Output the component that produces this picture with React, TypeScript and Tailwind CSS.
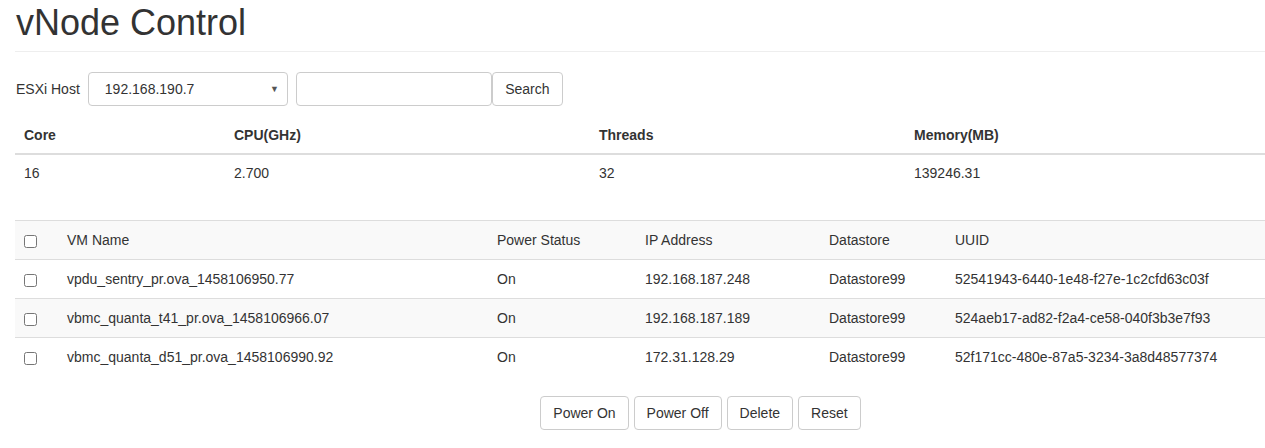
const host = {
    core: 16,
    cpu: '2.700',
    threads: 32,
    memory: '139246.31',
}

const vms = [
    { name: 'vpdu_sentry_pr.ova_1458106950.77', power: 'On', ip: '192.168.187.248', ds: 'Datastore99', uuid: '52541943-6440-1e48-f27e-1c2cfd63c03f' },
    { name: 'vbmc_quanta_t41_pr.ova_1458106966.07', power: 'On', ip: '192.168.187.189', ds: 'Datastore99', uuid: '524aeb17-ad82-f2a4-ce58-040f3b3e7f93' },
    { name: 'vbmc_quanta_d51_pr.ova_1458106990.92', power: 'On', ip: '172.31.128.29', ds: 'Datastore99', uuid: '52f171cc-480e-87a5-3234-3a8d48577374' },
]

function Check() {
    return <input type="checkbox" className="w-[13px] h-[13px] m-0 align-middle accent-gray-400" />
}

function Btn({ label, className = '' }: { label: string; className?: string }) {
    return (
        <button className={`h-[34px] px-3 border border-[#ccc] rounded-[4px] bg-white text-[14px] text-[#333] ${className}`}>
            {label}
        </button>
    )
}

export default function App() {
    return (
        <div className="w-[1265px] overflow-hidden bg-white text-[#333] text-[14px] leading-[20px] font-['Liberation_Sans',Arial,sans-serif]">
            <div className="w-[1401px] px-[15px]">
                {/* Header */}
                <div className="border-b border-[#eee] pt-[3px] pb-[8px]">
                    <h1 className="text-[36px] leading-[40px] font-normal pl-[1px]">vNode Control</h1>
                </div>

                {/* Host form */}
                <div className="flex items-center mt-[20px] h-[34px]">
                    <label className="pl-[1px] mr-[8px]">ESXi Host</label>
                    <div className="w-[200px] h-[34px] border border-[#ccc] rounded-[4px] flex items-center justify-between pl-[16px] pr-[8px]">
                        <span>192.168.190.7</span>
                        <span className="text-[9px] leading-none text-[#555]">▼</span>
                    </div>
                    <div className="w-[196px] h-[34px] border border-[#ccc] rounded-[4px] ml-[8px]" />
                    <Btn label="Search" className="w-[71px]" />
                </div>

                {/* Host stats */}
                <table className="w-full border-collapse mt-[11px] mb-[29px]">
                    <thead>
                        <tr className="border-b-2 border-[#ddd] text-left">
                            <th className="w-[211px] px-[9px] py-[8px] font-bold h-[36px]">Core</th>
                            <th className="w-[365px] px-[8px] py-[8px] font-bold">CPU(GHz)</th>
                            <th className="w-[315px] px-[8px] py-[8px] font-bold">Threads</th>
                            <th className="px-[8px] py-[8px] font-bold">Memory(MB)</th>
                        </tr>
                    </thead>
                    <tbody>
                        <tr>
                            <td className="px-[9px] py-[8px] h-[37px]">{host.core}</td>
                            <td className="px-[8px] py-[8px]">{host.cpu}</td>
                            <td className="px-[8px] py-[8px]">{host.threads}</td>
                            <td className="px-[8px] py-[8px]">{host.memory}</td>
                        </tr>
                    </tbody>
                </table>

                {/* VM list */}
                <table className="w-full border-collapse border-t border-[#ddd]">
                    <tbody>
                        <tr className="bg-[#f9f9f9] border-b border-[#ddd] text-left h-[39px]">
                            <td className="w-[44px] pl-[9px]"><Check /></td>
                            <td className="w-[430px] px-[8px]">VM Name</td>
                            <td className="w-[148px] px-[8px]">Power Status</td>
                            <td className="w-[184px] px-[8px]">IP Address</td>
                            <td className="w-[126px] px-[8px]">Datastore</td>
                            <td className="px-[8px]">UUID</td>
                        </tr>
                        {vms.map((vm, i) => (
                            <tr key={vm.uuid} className={`h-[39px] ${i < vms.length - 1 ? 'border-b border-[#ddd]' : ''} ${i % 2 === 1 ? 'bg-[#f9f9f9]' : ''}`}>
                                <td className="pl-[9px]"><Check /></td>
                                <td className="px-[8px]">{vm.name}</td>
                                <td className="px-[8px]">{vm.power}</td>
                                <td className="px-[8px]">{vm.ip}</td>
                                <td className="px-[8px]">{vm.ds}</td>
                                <td className="px-[8px]">{vm.uuid}</td>
                            </tr>
                        ))}
                    </tbody>
                </table>

                {/* Actions */}
                <div className="flex justify-center gap-[5px] mt-[19px] pb-[18px]">
                    <Btn label="Power On" />
                    <Btn label="Power Off" />
                    <Btn label="Delete" />
                    <Btn label="Reset" />
                </div>
            </div>
        </div>
    )
}
